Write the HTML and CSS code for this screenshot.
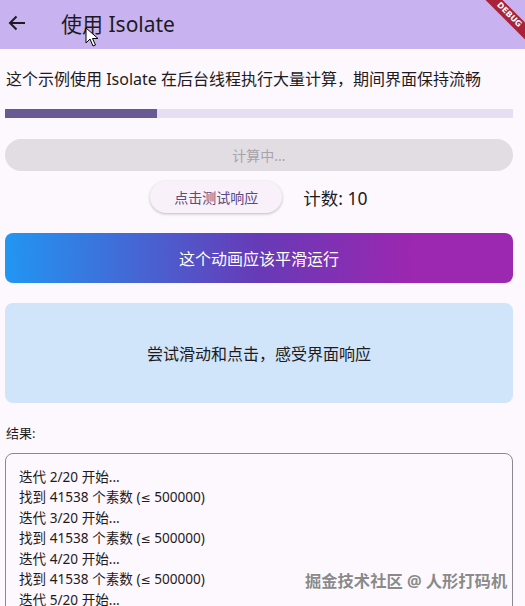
FILE: index.html
```html
<!DOCTYPE html>
<html lang="zh-CN">

<head>
    <meta charset="UTF-8">
    <meta name="viewport" content="width=device-width, initial-scale=1.0">
    <title>使用 Isolate</title>
    <link rel="stylesheet" href="styles.css">
</head>

<body>
    <header class="app-bar">
        <svg class="back" width="18" height="16" viewBox="0 0 18 16">
            <path d="M17 8H2M8.5 1.5L2 8l6.5 6.5" fill="none" stroke="#1d1b20" stroke-width="2"/>
        </svg>
        <h1 class="title">使用 Isolate</h1>
        <div class="debug">DEBUG</div>
        <svg class="cursor" width="14" height="20" viewBox="0 0 14 20">
            <path d="M1 1v15l4-4 3 7 2.5-1-3-6.5h5.5z" fill="#fff" stroke="#000" stroke-width="1"/>
        </svg>
    </header>

    <main class="content">
        <p class="intro">这个示例使用 Isolate 在后台线程执行大量计算，期间界面保持流畅</p>

        <div class="progress">
            <div class="progress-fill" style="width: 30%;"></div>
        </div>

        <button class="busy-btn" disabled>计算中...</button>

        <div class="tap-row">
            <button class="tap-btn">点击测试响应</button>
            <span class="counter">计数: 10</span>
        </div>

        <div class="gradient-box">这个动画应该平滑运行</div>

        <div class="hint-box">尝试滑动和点击，感受界面响应</div>

        <div class="result-label">结果:</div>
        <div class="result-box">
            <div>迭代 2/20 开始...</div>
            <div>找到 41538 个素数 (<span class="le">≤</span> 500000)</div>
            <div>迭代 3/20 开始...</div>
            <div>找到 41538 个素数 (<span class="le">≤</span> 500000)</div>
            <div>迭代 4/20 开始...</div>
            <div>找到 41538 个素数 (<span class="le">≤</span> 500000)</div>
            <div>迭代 5/20 开始...</div>
        </div>
    </main>

    <div class="watermark">掘金技术社区 @ 人形打码机</div>
</body>

</html>
```

FILE: styles.css
```css
body {
    font-family: "Noto Sans", "Noto Sans CJK SC", sans-serif;
    background-color: #fdf7fe;
    color: #1d1b20;
    margin: 0;
    padding: 0;
    width: 525px;
    height: 606px;
    overflow: hidden;
    position: relative;
}

.app-bar {
    height: 49px;
    background-color: #c8b3f0;
    display: flex;
    align-items: center;
    position: relative;
    overflow: hidden;
}

.back {
    margin-left: 8px;
    margin-top: -4px;
}

.title {
    margin: -4px 0 0 35px;
    font-size: 21px;
    font-weight: 400;
    color: #1d1b20;
}

.cursor {
    position: absolute;
    left: 85px;
    top: 27px;
}

.debug {
    position: absolute;
    top: 9px;
    right: -24px;
    width: 80px;
    height: 12px;
    line-height: 12px;
    background-color: #a8233a;
    color: #fff;
    font-family: "DejaVu Sans", sans-serif;
    font-size: 8px;
    font-weight: bold;
    text-align: center;
    transform: rotate(45deg);
}

.content {
    padding: 0 12px 0 5px;
}

.intro {
    margin: 0;
    padding: 17px 0 0 1px;
    height: 60px;
    box-sizing: border-box;
    font-size: 16px;
    line-height: 26px;
}

.progress {
    height: 9px;
    background-color: #e6def3;
    margin-bottom: 21px;
}

.progress-fill {
    height: 100%;
    background-color: #6a5a93;
}

.busy-btn {
    display: block;
    width: 100%;
    height: 32px;
    border: none;
    border-radius: 16px;
    background-color: #e2dde3;
    color: #a8a3aa;
    font-family: inherit;
    font-size: 14px;
}

.tap-row {
    display: flex;
    justify-content: center;
    align-items: center;
    gap: 21px;
    margin-top: 10px;
}

.tap-btn {
    height: 32px;
    padding: 0 24px;
    border: none;
    border-radius: 16px;
    background-color: #f9f1fa;
    box-shadow: 0 1px 3px rgba(0, 0, 0, 0.25);
    color: #5b4a82;
    font-family: inherit;
    font-size: 14px;
}

.counter {
    font-size: 17.5px;
}

.gradient-box {
    margin-top: 20px;
    height: 50px;
    border-radius: 8px;
    background: linear-gradient(to right, #2196f3, #673ab7 50%, #9c27b0 80%);
    color: #fff;
    font-size: 16px;
    display: flex;
    align-items: center;
    justify-content: center;
}

.hint-box {
    margin-top: 20px;
    height: 100px;
    border-radius: 8px;
    background-color: #d0e4fa;
    font-size: 16px;
    display: flex;
    align-items: center;
    justify-content: center;
}

.result-label {
    margin-top: 20px;
    padding-left: 1px;
    font-size: 13px;
}

.result-box {
    margin-top: 11px;
    border: 1px solid #8d8792;
    border-radius: 8px;
    padding: 13px 13px;
    font-size: 13.6px;
    line-height: 20px;
    height: 200px;
}

.le {
    font-family: "DejaVu Sans", sans-serif;
    font-size: 12px;
}

.watermark {
    position: absolute;
    left: 305px;
    top: 568px;
    font-size: 16.3px;
    font-weight: bold;
    color: #8a8a8a;
    text-shadow: 0 0 2px #fff, 0 0 2px #fff;
}
```
